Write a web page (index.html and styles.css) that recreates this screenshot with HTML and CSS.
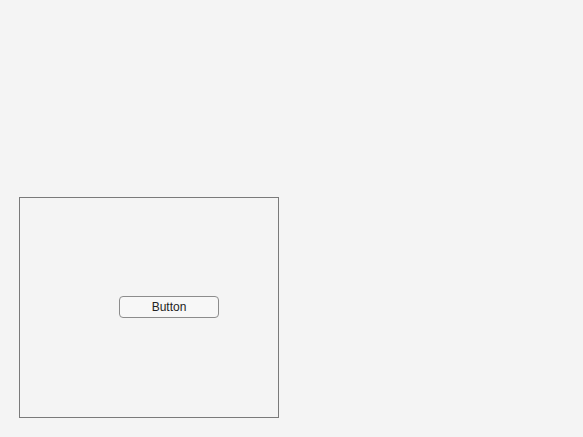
FILE: index.html
```html
<!DOCTYPE html>
<html lang="en">
<head>
    <meta charset="UTF-8">
    <meta name="viewport" content="width=device-width, initial-scale=1.0">
    <title>Figure</title>
    <link rel="stylesheet" href="styles.css">
</head>

<body>
    <div class="figure">
        <!-- Panel with a single push button -->
        <div class="panel">
            <button type="button" class="push-button">Button</button>
        </div>
    </div>
</body>

</html>
```

FILE: styles.css
```css
/* Basic styling for the page */
html, body {
    height: 100%;
}

body {
    font-family: 'Liberation Sans', Arial, sans-serif;
    background-color: #f4f4f4;
    margin: 0;
    padding: 0;
    color: #222;
}

.figure {
    padding-top: 197px;
    padding-left: 19px;
}

.panel {
    box-sizing: border-box;
    width: 260px;
    height: 221px;
    border: 1px solid #7a7a7a;
    padding-top: 98px;
    padding-left: 99px;
}

.push-button {
    display: block;
    box-sizing: border-box;
    width: 100px;
    height: 22px;
    margin: 0;
    padding: 0;
    background-color: #f7f7f7;
    border: 1px solid #8c8c8c;
    border-radius: 4px;
    font-family: 'Liberation Sans', Arial, sans-serif;
    font-size: 12px;
    color: #222;
    cursor: pointer;
}
```
